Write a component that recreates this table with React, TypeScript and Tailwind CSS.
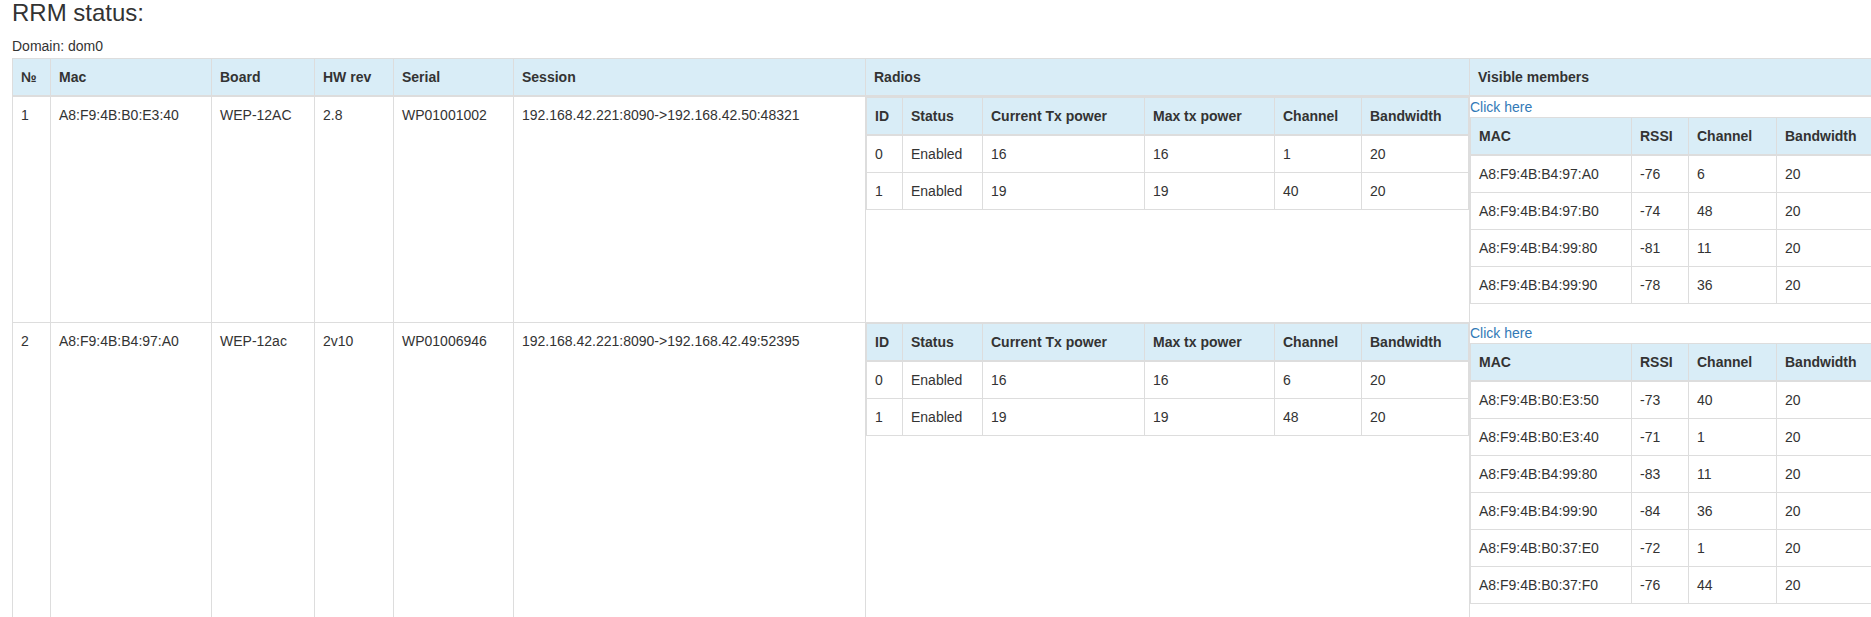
const font = { fontFamily: '"Liberation Sans", Arial, Helvetica, sans-serif' };

type Member = [string, string, string, string];
type Radio = [string, string, string, string, string, string];

const aps: {
  no: string;
  mac: string;
  board: string;
  hw: string;
  serial: string;
  session: string;
  radios: Radio[];
  members: Member[];
}[] = [
  {
    no: '1',
    mac: 'A8:F9:4B:B0:E3:40',
    board: 'WEP-12AC',
    hw: '2.8',
    serial: 'WP01001002',
    session: '192.168.42.221:8090->192.168.42.50:48321',
    radios: [
      ['0', 'Enabled', '16', '16', '1', '20'],
      ['1', 'Enabled', '19', '19', '40', '20'],
    ],
    members: [
      ['A8:F9:4B:B4:97:A0', '-76', '6', '20'],
      ['A8:F9:4B:B4:97:B0', '-74', '48', '20'],
      ['A8:F9:4B:B4:99:80', '-81', '11', '20'],
      ['A8:F9:4B:B4:99:90', '-78', '36', '20'],
    ],
  },
  {
    no: '2',
    mac: 'A8:F9:4B:B4:97:A0',
    board: 'WEP-12ac',
    hw: '2v10',
    serial: 'WP01006946',
    session: '192.168.42.221:8090->192.168.42.49:52395',
    radios: [
      ['0', 'Enabled', '16', '16', '6', '20'],
      ['1', 'Enabled', '19', '19', '48', '20'],
    ],
    members: [
      ['A8:F9:4B:B0:E3:50', '-73', '40', '20'],
      ['A8:F9:4B:B0:E3:40', '-71', '1', '20'],
      ['A8:F9:4B:B4:99:80', '-83', '11', '20'],
      ['A8:F9:4B:B4:99:90', '-84', '36', '20'],
      ['A8:F9:4B:B0:37:E0', '-72', '1', '20'],
      ['A8:F9:4B:B0:37:F0', '-76', '44', '20'],
    ],
  },
];

const th = 'border border-b-2 border-[#ddd] bg-[#d9edf7] p-2 text-left align-bottom font-bold leading-5';
const td = 'border border-[#ddd] p-2 text-left align-top leading-5';

function RadiosTable({ rows }: { rows: Radio[] }) {
  return (
    <table className="mb-[18px] w-full table-fixed border-collapse border border-[#ddd]">
      <colgroup>
        <col className="w-[36px]" />
        <col className="w-[80px]" />
        <col className="w-[162px]" />
        <col className="w-[130px]" />
        <col className="w-[87px]" />
        <col />
      </colgroup>
      <thead>
        <tr>
          <th className={th}>ID</th>
          <th className={th}>Status</th>
          <th className={th}>Current Tx power</th>
          <th className={th}>Max tx power</th>
          <th className={th}>Channel</th>
          <th className={th}>Bandwidth</th>
        </tr>
      </thead>
      <tbody>
        {rows.map((r) => (
          <tr key={r[0]}>
            {r.map((v, i) => (
              <td key={i} className={td}>
                {v}
              </td>
            ))}
          </tr>
        ))}
      </tbody>
    </table>
  );
}

function MembersTable({ rows }: { rows: Member[] }) {
  return (
    <table className="mb-[18px] w-full table-fixed border-collapse border border-[#ddd]">
      <colgroup>
        <col className="w-[161px]" />
        <col className="w-[57px]" />
        <col className="w-[88px]" />
        <col />
      </colgroup>
      <thead>
        <tr>
          <th className={th}>MAC</th>
          <th className={th}>RSSI</th>
          <th className={th}>Channel</th>
          <th className={th}>Bandwidth</th>
        </tr>
      </thead>
      <tbody>
        {rows.map((r) => (
          <tr key={r[0]}>
            {r.map((v, i) => (
              <td key={i} className={td}>
                {v}
              </td>
            ))}
          </tr>
        ))}
      </tbody>
    </table>
  );
}

export default function App() {
  return (
    <div className="min-h-screen overflow-hidden bg-white px-3 text-[14px] text-[#333]" style={font}>
      <h3 className="mb-[10px] text-[24px] font-normal leading-[26.4px]">RRM status:</h3>
      <div className="mb-[2px] leading-5">Domain: dom0</div>

      <table className="w-[1877px] table-fixed border-collapse border border-[#ddd]">
        <colgroup>
          <col className="w-[38px]" />
          <col className="w-[161px]" />
          <col className="w-[103px]" />
          <col className="w-[79px]" />
          <col className="w-[120px]" />
          <col className="w-[352px]" />
          <col className="w-[604px]" />
          <col />
        </colgroup>
        <thead>
          <tr>
            <th className={th}>№</th>
            <th className={th}>Mac</th>
            <th className={th}>Board</th>
            <th className={th}>HW rev</th>
            <th className={th}>Serial</th>
            <th className={th}>Session</th>
            <th className={th}>Radios</th>
            <th className={th}>Visible members</th>
          </tr>
        </thead>
        <tbody>
          {aps.map((ap) => (
            <tr key={ap.no}>
              <td className={td}>{ap.no}</td>
              <td className={td}>{ap.mac}</td>
              <td className={td}>{ap.board}</td>
              <td className={td}>{ap.hw}</td>
              <td className={td}>{ap.serial}</td>
              <td className={td}>{ap.session}</td>
              <td className="border border-[#ddd] p-0 align-top">
                <RadiosTable rows={ap.radios} />
              </td>
              <td className="border border-[#ddd] p-0 align-top">
                <a href="#" className="block leading-5 text-[#337ab7] no-underline">
                  Click here
                </a>
                <MembersTable rows={ap.members} />
              </td>
            </tr>
          ))}
        </tbody>
      </table>
    </div>
  );
}
